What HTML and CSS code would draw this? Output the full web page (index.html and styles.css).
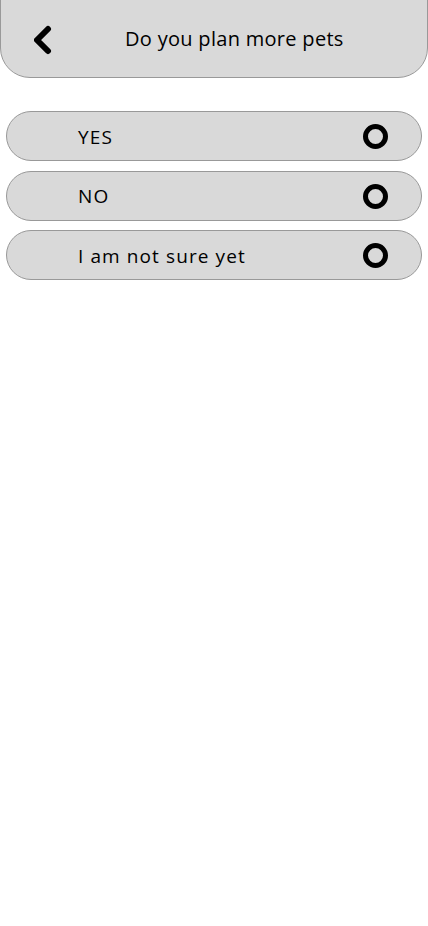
FILE: index.html
```html
<!DOCTYPE html>
<html lang="en">
<head>
<meta charset="utf-8">
<title>Do you plan more pets</title>
<link rel="stylesheet" href="styles.css">
</head>
<body>
<header class="topbar">
  <button class="back" aria-label="Back">
    <svg width="20" height="30" viewBox="0 0 20 30"><path d="M14 4 L3 15 L14 26" fill="none" stroke="#000" stroke-width="6" stroke-linecap="round" stroke-linejoin="round"/></svg>
  </button>
  <h1 class="title">Do you plan more pets</h1>
</header>
<main class="options">
  <label class="option"><span class="label">YES</span><span class="radio"></span></label>
  <label class="option"><span class="label">NO</span><span class="radio"></span></label>
  <label class="option"><span class="label">I am not sure yet</span><span class="radio"></span></label>
</main>
</body>
</html>
```

FILE: styles.css
```css
* { box-sizing: border-box; }
html, body { margin: 0; padding: 0; background: #fff; }
body { font-family: "Open Sans", "DejaVu Sans", sans-serif; color: #000; }

.topbar {
  height: 79px;
  margin-top: -1px;
  background: #d9d9d9;
  border: 1px solid #999;
  border-radius: 0 0 30px 30px;
  display: flex;
  align-items: center;
  padding-left: 33px;
}
.back {
  background: none;
  border: none;
  padding: 0;
  width: 20px;
  height: 30px;
  display: flex;
  margin-top: 2px;
}
.title {
  margin: 0 0 0 71px;
  font-size: 20px;
  font-weight: 400;
  letter-spacing: 0.3px;
}

.options {
  display: flex;
  flex-direction: column;
  gap: 9.5px;
  padding: 33px 6px 0 6px;
}
.option {
  height: 50px;
  width: 416px;
  background: #d9d9d9;
  border: 1px solid #999;
  border-radius: 25px;
  display: flex;
  align-items: center;
  justify-content: space-between;
  padding: 1px 33px 0 71px;
}
.label { font-size: 19px; letter-spacing: 1.1px; }
.radio {
  width: 25px;
  height: 25px;
  border: 5px solid #000;
  border-radius: 50%;
  background: #d9d9d9;
}
```
